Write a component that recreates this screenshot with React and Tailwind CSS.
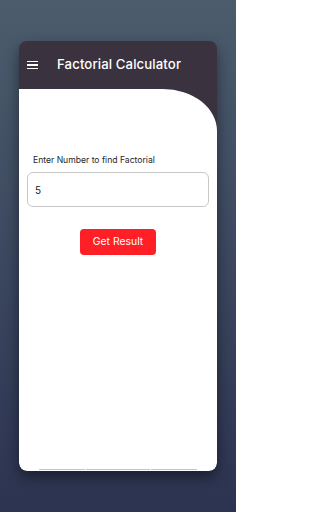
import React, { useState } from "react";

const App = () => {
  const [value, setValue] = useState("5");

  return (
    <div
      className="w-[236px] h-[512px] overflow-hidden bg-gradient-to-b from-[#4c5c6c] via-[#3c4860] to-[#2c3350] pt-[41px] pl-[19px]"
      style={{ fontFamily: "Inter, 'Noto Sans', sans-serif" }}
    >
      <div className="w-[198px] h-[430px] rounded-[8px] bg-[#3a323e] overflow-hidden flex flex-col shadow-[0_6px_14px_rgba(0,0,0,0.45)]">
        {/* app bar */}
        <div className="h-[48px] flex items-center shrink-0">
          <div className="ml-[8px] w-[11px] flex flex-col gap-[2px]">
            <span className="block h-[1.5px] bg-white" />
            <span className="block h-[1.5px] bg-white" />
            <span className="block h-[1.5px] bg-white" />
          </div>
          <h1 className="ml-[19px] text-white text-[13.2px] font-medium tracking-[0.1px]">
            Factorial Calculator
          </h1>
        </div>

        {/* body */}
        <div className="flex-1 bg-white rounded-tr-[54px_42px] rounded-b-[8px] flex flex-col relative">
          <label className="mt-[65px] ml-[14px] text-[8.6px] leading-[12px] text-[#1e1e1e]">
            Enter Number to find Factorial
          </label>
          <input
            type="text"
            value={value}
            onChange={(e) => setValue(e.target.value)}
            className="mt-[6px] ml-[8px] w-[182px] h-[35px] rounded-[6px] border border-[#c8c8c8] px-[7px] text-[10px] text-[#222] outline-none"
          />
          <div className="flex justify-center mt-[22px]">
            <button className="w-[76px] h-[26px] rounded-[4px] bg-[#ff1f26] text-white text-[10.4px]">
              Get Result
            </button>
          </div>

          <div className="absolute bottom-[1px] left-[20px] flex gap-[1px]">
            <span className="block w-[46px] h-[1px] bg-[#c4c4c4]" />
            <span className="block w-[64px] h-[1px] bg-[#c4c4c4]" />
            <span className="block w-[46px] h-[1px] bg-[#c4c4c4]" />
          </div>
        </div>
      </div>
    </div>
  );
};

export default App;
